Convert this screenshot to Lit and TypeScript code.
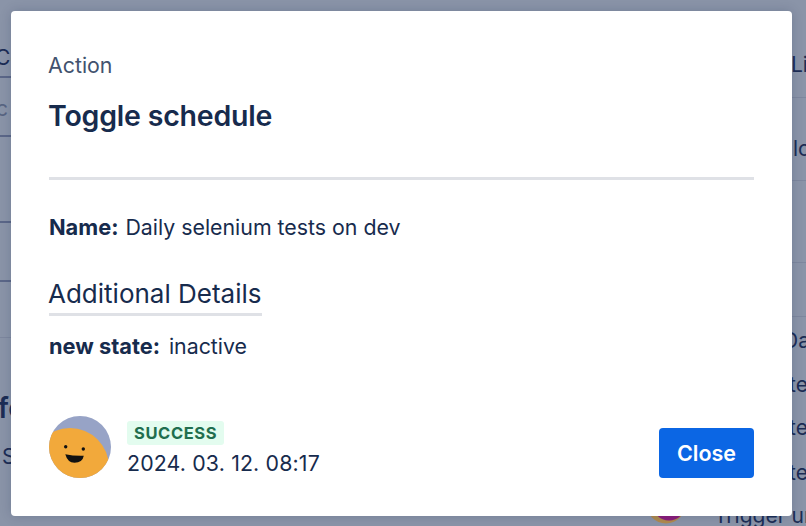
import { LitElement, html, css } from "lit";
import { customElement } from "lit/decorators.js";

@customElement("app-root")
export class AppRoot extends LitElement {
  static styles = css`
    :host {
      display: block;
      position: relative;
      width: 806px;
      height: 526px;
      overflow: hidden;
      background: #8a94a8;
      font-family: Inter, "Noto Sans", sans-serif;
      color: #172b4d;
    }
    .page {
      display: grid;
      grid-template-columns: 11px 1fr 14px;
      height: 526px;
      color: #1c2d55;
    }
    .left, .right { position: relative; overflow: hidden; font-size: 21px; }
    .frag { position: absolute; white-space: nowrap; line-height: 22px; }
    .rule { position: absolute; left: 0; right: 0; height: 1px; background: #7d879e; }
    .rule.dark { height: 2px; background: #5b6788; }
    .bottom { position: absolute; left: 640px; top: 500px; width: 160px; height: 26px; }
    .trigger { position: absolute; left: 74px; top: 5px; font-size: 21px; line-height: 22px; color: #1c2d55; white-space: nowrap; }
    .overlay {
      position: absolute;
      inset: 0;
      display: flex;
      align-items: flex-start;
      justify-content: flex-start;
      padding: 11px 0 0 11px;
      box-sizing: border-box;
    }
    .modal {
      width: 781px;
      height: 505px;
      box-sizing: border-box;
      background: #fff;
      border-radius: 4px;
      box-shadow: 0 0 12px rgba(9, 30, 66, 0.18);
      padding: 40px 38px 38px 38px;
      display: flex;
      flex-direction: column;
    }
    .eyebrow { font-size: 21.33px; line-height: 28px; color: #42526e; text-indent: -1px; }
    h1 {
      margin: 20px 0 0;
      font-size: 28.5px;
      line-height: 34px;
      font-weight: 600;
      letter-spacing: -0.2px;
      color: #172b4d;
      text-indent: -1px;
    }
    .divider { height: 3px; background: #dfe1e6; margin-top: 44px; flex: none; }
    .row { display: flex; font-size: 21.33px; line-height: 28px; color: #172b4d; }
    .row b { font-weight: 700; font-size: 21.8px; }
    .name { margin-top: 33px; gap: 7px; }
    .details { align-self: flex-start; margin-top: 36px; }
    h2 {
      margin: 0;
      font-size: 26px;
      line-height: 34px;
      font-weight: 400;
      color: #172b4d;
      padding-bottom: 2px;
      border-bottom: 3px solid #dfe1e6;
      text-indent: -1px;
    }
    .state { margin-top: 16px; gap: 9px; }
    .footer { margin-top: auto; display: flex; align-items: flex-end; gap: 16px; }
    .avatar { width: 62px; height: 62px; flex: none; display: block; }
    .meta { display: flex; flex-direction: column; gap: 4px; flex: 1; padding-bottom: 1px; }
    .lozenge {
      align-self: flex-start;
      background: #e3fcef;
      color: #216e4e;
      font-size: 16.5px;
      line-height: 24px;
      font-weight: 700;
      letter-spacing: 0.6px;
      padding: 0 7px;
      border-radius: 3px;
    }
    .date { font-size: 21.33px; line-height: 28px; color: #172b4d; letter-spacing: 0.15px; }
    button {
      all: unset;
      width: 95px;
      height: 50px;
      background: #0b66e4;
      color: #fff;
      border-radius: 4px;
      font-size: 21.5px;
      font-weight: 600;
      text-align: center;
      line-height: 50px;
    }
  `;

  render() {
    return html`
      <div class="page">
        <div class="left">
          <span class="frag" style="left:-5px;top:47px">Co</span>
          <div class="rule dark" style="top:76px"></div>
          <span class="frag" style="left:-4px;top:98px;opacity:.45">c</span>
          <div class="rule dark" style="top:135px"></div>
          <div class="rule dark" style="top:221px"></div>
          <div class="rule dark" style="top:280px"></div>
          <div class="rule" style="top:337px"></div>
          <span class="frag" style="left:-2px;top:394px;font-size:28px;line-height:28px;font-weight:600">fe</span>
          <span class="frag" style="left:2px;top:446px">S</span>
        </div>
        <div></div>
        <div class="right">
          <span class="frag" style="left:-1px;top:54px">Li</span>
          <div class="rule" style="top:97px"></div>
          <span class="frag" style="left:1px;top:138px">lo</span>
          <div class="rule" style="top:180px"></div>
          <div class="rule" style="top:262px"></div>
          <div class="rule" style="top:316px"></div>
          <span class="frag" style="left:-9px;top:330px">Da</span>
          <span class="frag" style="left:-3px;top:374px">te</span>
          <span class="frag" style="left:-3px;top:417px">te</span>
          <span class="frag" style="left:-3px;top:462px">te</span>
        </div>
      </div>
      <div class="bottom">
        <svg width="50" height="26" viewBox="0 0 50 26">
          <circle cx="26" cy="4" r="19.5" fill="#b08a4e"></circle>
          <circle cx="29" cy="4" r="16.5" fill="#8c1d7c"></circle>
        </svg>
        <span class="trigger">Trigger ur</span>
      </div>
      <div class="overlay">
        <div class="modal">
          <div class="eyebrow">Action</div>
          <h1>Toggle schedule</h1>
          <div class="divider"></div>
          <div class="row name"><b>Name:</b><span>Daily selenium tests on dev</span></div>
          <div class="details"><h2>Additional Details</h2></div>
          <div class="row state"><b>new state:</b><span>inactive</span></div>
          <div class="footer">
            <svg class="avatar" viewBox="0 0 62 62">
              <defs><clipPath id="c"><circle cx="31" cy="31" r="31"></circle></clipPath></defs>
              <g clip-path="url(#c)">
                <rect width="62" height="62" fill="#97a3c6"></rect>
                <circle cx="21" cy="51" r="39" fill="#f2a93b"></circle>
                <circle cx="16.7" cy="30.7" r="1.7" fill="#111"></circle>
                <circle cx="34.3" cy="33" r="1.7" fill="#111"></circle>
                <path d="M16.3 38.2 Q25 40.2 34.8 39.8 Q33.5 46.8 25.5 46.8 Q18.5 46.5 16.3 38.2 Z" fill="#111"></path>
              </g>
            </svg>
            <div class="meta">
              <span class="lozenge">SUCCESS</span>
              <span class="date">2024. 03. 12. 08:17</span>
            </div>
            <button>Close</button>
          </div>
        </div>
      </div>
    `;
  }
}
